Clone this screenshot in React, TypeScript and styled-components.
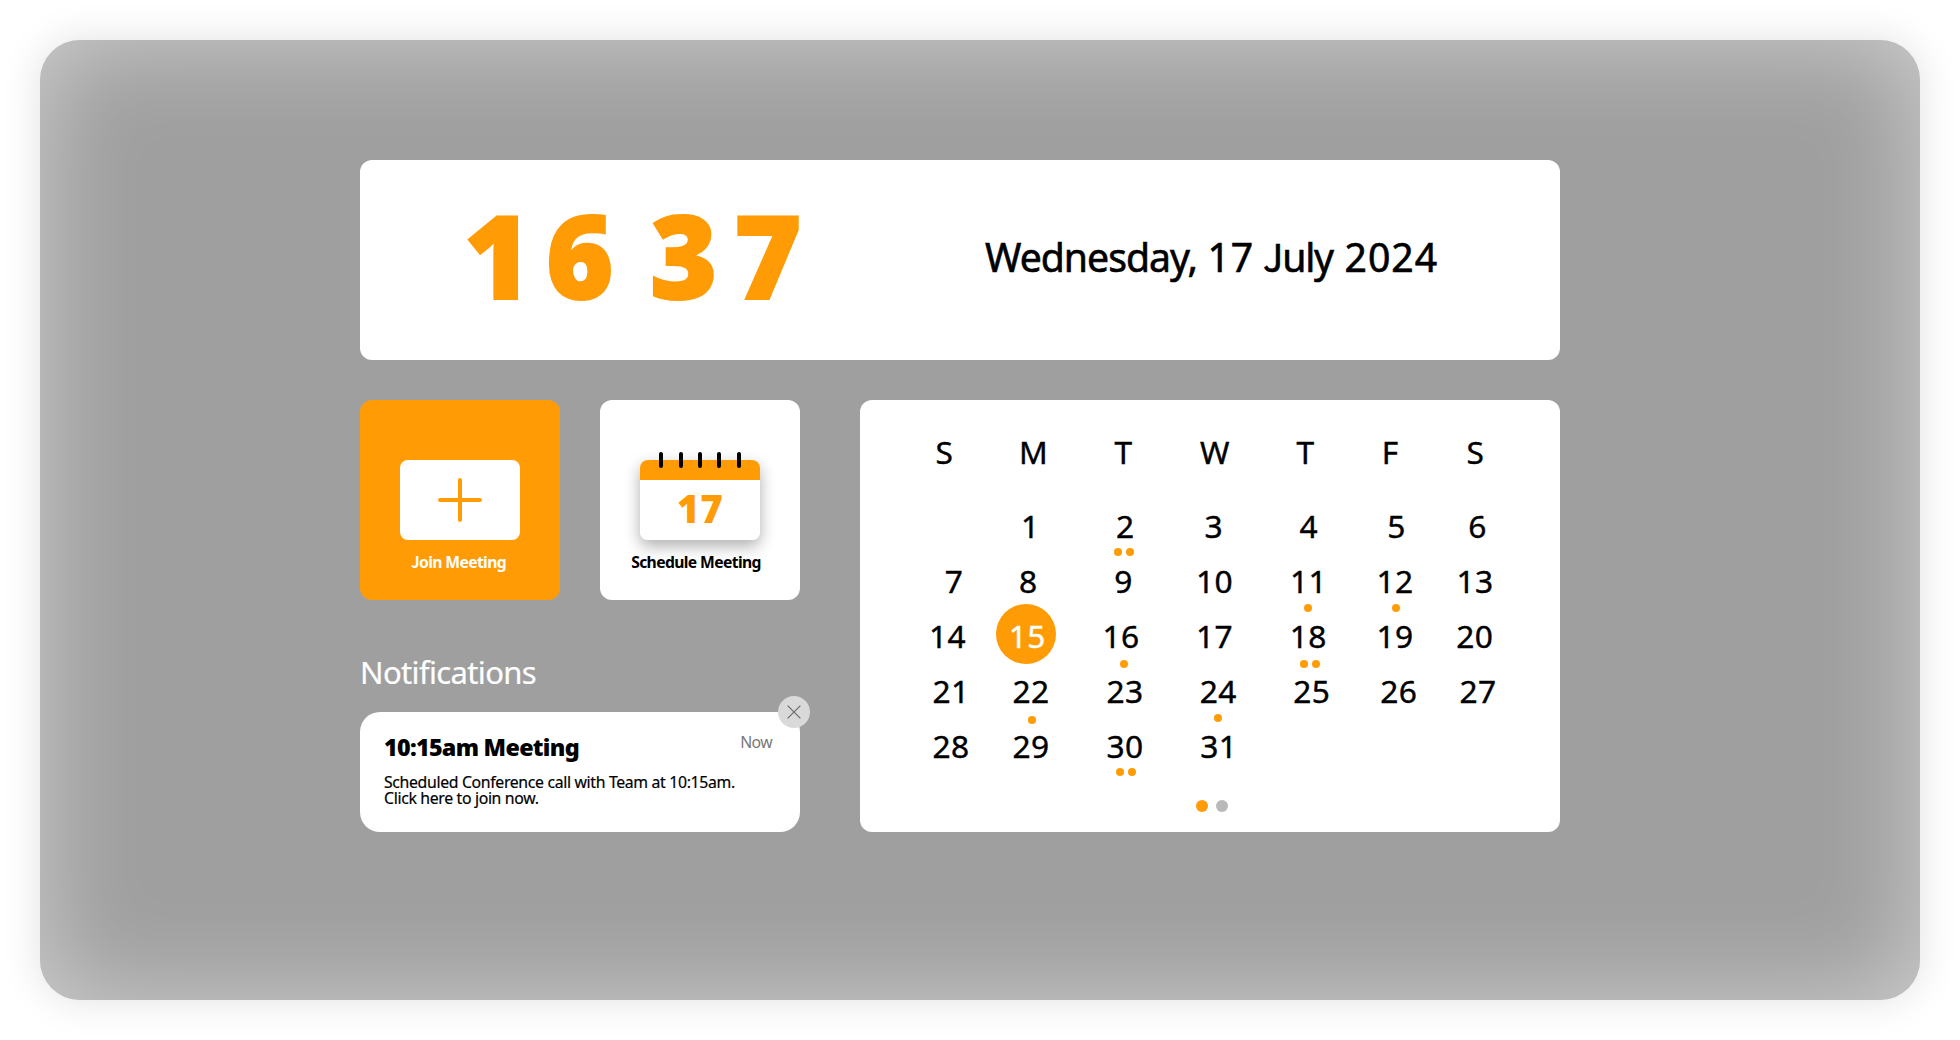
import React from 'react';
import styled, { createGlobalStyle } from 'styled-components';

const ORANGE = '#ff9b05';

const GlobalStyle = createGlobalStyle`
  * { box-sizing: border-box; }
  body { margin: 0; background: #fff; font-family: "Noto Sans", "Open Sans", sans-serif; color: #000; }
`;

const Page = styled.div`
  width: 1960px;
  height: 1040px;
  padding: 40px;
  overflow: hidden;
`;

const Panel = styled.main`
  width: 1880px;
  height: 960px;
  padding: 120px 360px 0 320px;
  border-radius: 40px;
  background: #9f9f9f;
  box-shadow: 0 0 40px rgba(0, 0, 0, 0.12), inset 0 0 100px rgba(255, 255, 255, 0.5);
  display: flex;
  flex-direction: column;
  gap: 40px;
`;

const Clock = styled.header`
  height: 200px;
  border-radius: 12px;
  background: #fff;
  display: flex;
  justify-content: space-between;
  padding: 0 121px 0 104px;
  white-space: nowrap;
`;

const Time = styled.div`
  display: flex;
  font-size: 115.2px;
  font-weight: 900;
  line-height: 190px;
  color: ${ORANGE};
  -webkit-text-stroke: 2px ${ORANGE};
`;

const Digit = styled.span<{ $w: number }>`
  width: ${p => p.$w}px;
`;

const DateText = styled.div`
  width: 454px;
  display: flex;
  font-size: 39.2px;
  line-height: 194px;
  -webkit-text-stroke: 0.6px #000;
`;

const DatePart = styled.span<{ $w: number; $track: number }>`
  width: ${p => p.$w}px;
  letter-spacing: ${p => p.$track}px;
`;

/* Capital J that sits on the baseline */
const BaseJ = styled.span`
  font-family: "Noto Sans CJK KR", "Noto Sans", sans-serif;
  font-size: 0.97em;
  line-height: 0;
`;

const Body = styled.div`
  display: flex;
  gap: 60px;
`;

const Left = styled.div`
  width: 440px;
  display: flex;
  flex-direction: column;
`;

const Actions = styled.div`
  display: flex;
  gap: 40px;
`;

const Action = styled.button<{ $primary?: boolean }>`
  width: 200px;
  height: 200px;
  border: 0;
  border-radius: 12px;
  padding: 60px 0 0 0;
  display: flex;
  flex-direction: column;
  align-items: center;
  font: inherit;
  background: ${p => (p.$primary ? ORANGE : '#fff')};
  color: ${p => (p.$primary ? '#fff' : '#000')};
`;

const Label = styled.span<{ $shift: number }>`
  margin-top: 12px;
  margin-right: ${p => p.$shift}px;
  font-size: 15.7px;
  font-weight: 700;
  line-height: 20px;
  letter-spacing: -0.62px;
  white-space: nowrap;
`;

const PlusBox = styled.div`
  width: 120px;
  height: 80px;
  border-radius: 8px;
  background: #fff;
  display: flex;
  align-items: center;
  justify-content: center;
`;

const CalIcon = styled.div`
  position: relative;
  width: 120px;
  height: 80px;
  border-radius: 8px;
  background: linear-gradient(${ORANGE} 20px, #fff 20px);
  box-shadow: 0 6px 16px rgba(0, 0, 0, 0.32);
`;

const Rings = styled.svg`
  position: absolute;
  left: 0;
  top: -8px;
`;

const CalDay = styled.div`
  padding: 20px 0 0 37px;
  font-size: 38.5px;
  font-weight: 900;
  line-height: 56px;
  letter-spacing: 0.8px;
  text-align: left;
  color: ${ORANGE};
`;

const SectionTitle = styled.h2`
  margin: 52px 0 0;
  height: 60px;
  padding-left: 0;
  font-size: 31px;
  font-weight: 400;
  line-height: 40px;
  letter-spacing: -0.65px;
  color: #fff;
  -webkit-text-stroke: 0.2px #fff;
`;

const Note = styled.article`
  position: relative;
  height: 120px;
  border-radius: 20px;
  background: #fff;
  padding: 20px 28px 0 24px;
`;

const NoteHead = styled.div`
  display: flex;
  justify-content: space-between;
`;

const NoteTitle = styled.h3`
  margin: 0;
  font-size: 23.3px;
  font-weight: 900;
  line-height: 31px;
  letter-spacing: -0.7px;
`;

const Now = styled.span`
  font-size: 15.8px;
  line-height: 21px;
  letter-spacing: -0.6px;
  color: #777;
`;

const NoteText = styled.p`
  margin: 11px 0 0;
  font-size: 15.8px;
  line-height: 16px;
  letter-spacing: -0.33px;
  white-space: pre;
  -webkit-text-stroke: 0.2px #000;
`;

const Close = styled.button`
  position: absolute;
  right: -10px;
  top: -16px;
  width: 32px;
  height: 32px;
  padding: 0;
  border: 0;
  border-radius: 50%;
  background: #d9d9d9;
  display: flex;
  align-items: center;
  justify-content: center;
`;

const Calendar = styled.section`
  width: 700px;
  height: 432px;
  border-radius: 12px;
  background: #fff;
  padding: 33px 0 0 68px;
  display: flex;
  flex-direction: column;
`;

const Week = styled.div<{ $gap?: number }>`
  display: grid;
  grid-template-columns: 80px 94px 92px 94px 88px 78px 70px;
  height: 55px;
  margin-bottom: ${p => p.$gap ?? 0}px;
  font-size: 31.7px;
  line-height: 38px;
  letter-spacing: 0.4px;
  -webkit-text-stroke: 0.4px currentColor;
`;

const Cell = styled.div<{ $pad: number; $selected?: boolean }>`
  position: relative;
  z-index: 0;
  padding-left: ${p => p.$pad}px;
  white-space: nowrap;
  color: ${p => (p.$selected ? '#fff' : 'inherit')};
`;

const Selected = styled.i`
  position: absolute;
  z-index: -1;
  left: -12px;
  top: -13px;
  width: 60px;
  height: 60px;
  border-radius: 50%;
  background: ${ORANGE};
`;

const Marks = styled.div<{ $x: number; $y: number }>`
  position: absolute;
  left: ${p => p.$x}px;
  top: ${p => p.$y}px;
  display: flex;
  gap: 4px;
`;

const Mark = styled.i`
  width: 8px;
  height: 8px;
  border-radius: 50%;
  background: ${ORANGE};
`;

const Pager = styled.div`
  display: flex;
  gap: 8px;
  padding: 18px 0 0 268px;
`;

const PageDot = styled.i<{ $active?: boolean }>`
  width: 12px;
  height: 12px;
  border-radius: 50%;
  background: ${p => (p.$active ? ORANGE : '#b9b9b9')};
`;

type Day = { t: string; pad: number; marks?: [count: number, x: number, y: number]; selected?: boolean };
const d = (t: string, pad: number, marks?: Day['marks'], selected?: boolean): Day => ({ t, pad, marks, selected });

const NAMES: Day[] = [d('S', 7.5), d('M', 11), d('T', 12.6), d('W', 6), d('T', 8.6), d('F', 5.7), d('S', 12.4)];

const WEEKS: Day[][] = [
  [d('', 0), d('1', 13), d('2', 14, [2, 12, 41]), d('3', 10.4), d('4', 11.6), d('5', 11.3), d('6', 14.3)],
  [d('7', 16.8), d('8', 11), d('9', 12.3), d('10', 2.1), d('11', 2.1, [1, 16, 42]), d('12', 0.4, [1, 16, 42]), d('13', 2.6)],
  [d('14', 1.1), d('15', 0.8, undefined, true), d('16', 0.4, [1, 18, 43]), d('17', 2.1), d('18', 1.8, [2, 12, 43]), d('19', 0.4), d('20', 2.2)],
  [d('21', 4.6), d('22', 4.6, [1, 20, 44]), d('23', 4.4), d('24', 5.7, [1, 20, 42]), d('25', 5.2), d('26', 4.2), d('27', 5.6)],
  [d('28', 4.6), d('29', 4.6), d('30', 4.6, [2, 14, 41]), d('31', 6.2)],
];

function WeekRow({ days, gap }: { days: Day[]; gap?: number }) {
  return (
    <Week $gap={gap}>
      {days.map((day, i) => (
        <Cell key={i} $pad={day.pad} $selected={day.selected}>
          {day.selected && <Selected />}
          {day.t}
          {day.marks && (
            <Marks $x={day.marks[1]} $y={day.marks[2]}>
              {Array.from({ length: day.marks[0] }, (_, n) => <Mark key={n} />)}
            </Marks>
          )}
        </Cell>
      ))}
    </Week>
  );
}

export default function App() {
  return (
    <Page>
      <GlobalStyle />
      <Panel>
        <Clock>
          <Time>
            <Digit $w={82}>1</Digit>
            <Digit $w={104}>6</Digit>
            <Digit $w={84}>3</Digit>
            <Digit $w={69}>7</Digit>
          </Time>
          <DateText>
            <DatePart $w={222.5} $track={-1}>Wednesday,</DatePart>
            <DatePart $w={55.5} $track={0.9}>17</DatePart>
            <DatePart $w={81.5} $track={-1.2}><BaseJ>J</BaseJ>uly</DatePart>
            <DatePart $w={94} $track={1}>2024</DatePart>
          </DateText>
        </Clock>
        <Body>
          <Left>
            <Actions>
              <Action $primary>
                <PlusBox>
                  <svg width="44" height="44" viewBox="0 0 44 44" stroke={ORANGE} strokeWidth="4" strokeLinecap="round">
                    <path d="M22 2V42M2 22H42" />
                  </svg>
                </PlusBox>
                <Label $shift={3}><BaseJ>J</BaseJ>oin Meeting</Label>
              </Action>
              <Action>
                <CalIcon>
                  <Rings width="120" height="16" viewBox="0 0 120 16" stroke="#000" strokeWidth="4" strokeLinecap="round">
                    <path d="M21 2V14M41 2V14M60 2V14M79 2V14M99 2V14" />
                  </Rings>
                  <CalDay>17</CalDay>
                </CalIcon>
                <Label $shift={8}>Schedule Meeting</Label>
              </Action>
            </Actions>
            <SectionTitle>Notifications</SectionTitle>
            <Note>
              <NoteHead>
                <NoteTitle>10:15am Meeting</NoteTitle>
                <Now>Now</Now>
              </NoteHead>
              <NoteText>{'Scheduled Conference call with Team at 10:15am.\nClick here to join now.'}</NoteText>
              <Close aria-label="Dismiss">
                <svg width="14" height="14" viewBox="0 0 14 14" stroke="#6e6e6e" strokeWidth="1.3">
                  <path d="M0.6 0.6L13.4 13.4M13.4 0.6L0.6 13.4" />
                </svg>
              </Close>
            </Note>
          </Left>
          <Calendar>
            <WeekRow days={NAMES} gap={19} />
            {WEEKS.map((w, i) => <WeekRow key={i} days={w} />)}
            <Pager>
              <PageDot $active />
              <PageDot />
            </Pager>
          </Calendar>
        </Body>
      </Panel>
    </Page>
  );
}
